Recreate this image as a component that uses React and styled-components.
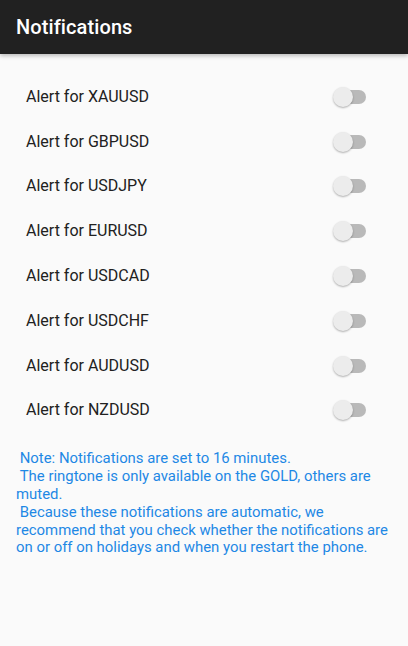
import React, { useState } from 'react';
import styled, { createGlobalStyle } from 'styled-components';

const GlobalStyle = createGlobalStyle`
  html, body {
    margin: 0;
    padding: 0;
    background: #fafafa;
    font-family: Roboto, "Noto Sans", Arial, sans-serif;
  }
`;

const Page = styled.div`
  width: 408px;
  min-height: 646px;
  background: #fafafa;
`;

const TopBar = styled.div`
  height: 54px;
  background: #212121;
  display: flex;
  align-items: center;
  padding: 0 16px;
  box-shadow: 0 2px 4px rgba(0, 0, 0, 0.25);
`;

const Title = styled.h1`
  margin: 0;
  color: #ffffff;
  font-size: 20px;
  font-weight: 500;
  letter-spacing: 0.1px;
`;

const List = styled.div`
  padding-top: 20px;
`;

const Row = styled.div`
  height: 44.8px;
  display: flex;
  align-items: center;
  justify-content: space-between;
  padding: 0 42px 0 26px;
`;

const Label = styled.span`
  font-size: 16px;
  color: #212121;
`;

const Switch = styled.button`
  position: relative;
  width: 33px;
  height: 20px;
  border: none;
  padding: 0;
  margin-top: 1px;
  background: transparent;
  cursor: pointer;
`;

const Track = styled.span`
  position: absolute;
  left: 4px;
  right: 0;
  top: 3px;
  height: 14px;
  border-radius: 7px;
  background: ${(p) => (p.on ? '#90caf9' : '#b9b9b9')};
`;

const Thumb = styled.span`
  position: absolute;
  top: 0;
  left: ${(p) => (p.on ? '13px' : '0')};
  width: 20px;
  height: 20px;
  border-radius: 50%;
  background: ${(p) => (p.on ? '#2196f3' : '#ececec')};
  box-shadow: 0 1px 2px rgba(0, 0, 0, 0.3);
`;

const Note = styled.p`
  margin: 18px 0 0;
  padding: 0 14px 0 16px;
  color: #1e88e5;
  font-size: 14.9px;
  line-height: 17.8px;
  white-space: pre-wrap;
`;

const pairs = ['XAUUSD', 'GBPUSD', 'USDJPY', 'EURUSD', 'USDCAD', 'USDCHF', 'AUDUSD', 'NZDUSD'];

function App() {
  const [enabled, setEnabled] = useState({});

  const toggle = (pair) => {
    setEnabled((prev) => ({ ...prev, [pair]: !prev[pair] }));
  };

  return (
    <Page>
      <GlobalStyle />
      <TopBar>
        <Title>Notifications</Title>
      </TopBar>
      <List>
        {pairs.map((pair) => (
          <Row key={pair}>
            <Label>Alert for {pair}</Label>
            <Switch onClick={() => toggle(pair)}>
              <Track on={enabled[pair]} />
              <Thumb on={enabled[pair]} />
            </Switch>
          </Row>
        ))}
      </List>
      <Note>
        {' Note: Notifications are set to 16 minutes.\n The ringtone is only available on the GOLD, others are muted.\n Because these notifications are automatic, we recommend that you check whether the notifications are on or off on holidays and when you restart the phone.'}
      </Note>
    </Page>
  );
}

export default App;
